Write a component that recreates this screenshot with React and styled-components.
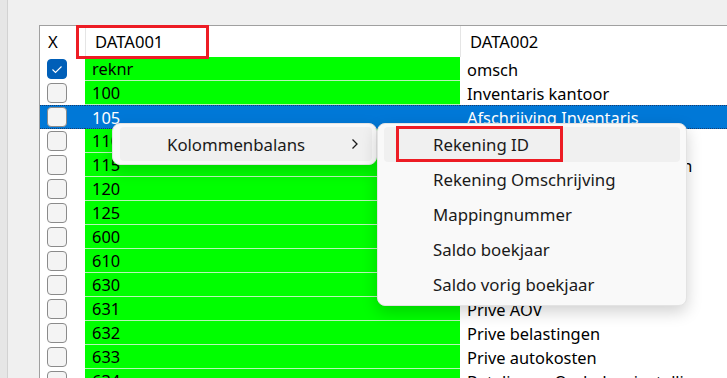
import React from "react";
import styled, { createGlobalStyle } from "styled-components";

const GlobalStyle = createGlobalStyle`
  html, body {
    margin: 0;
    padding: 0;
    background: #f0f0f0;
  }
  body {
    font-family: "Noto Sans", "Open Sans", sans-serif;
  }
`;

const rows = [
  { id: "reknr", omsch: "omsch", checked: true },
  { id: "100", omsch: "Inventaris kantoor" },
  { id: "105", omsch: "Afschrijving Inventaris", selected: true },
  { id: "110", omsch: "Vervoermiddelen" },
  { id: "115", omsch: "Afschrijving vervoermiddelen" },
  { id: "120", omsch: "Bedrijfspand" },
  { id: "125", omsch: "Afschrijving pand" },
  { id: "600", omsch: "Kapitaal" },
  { id: "610", omsch: "Prive stortingen" },
  { id: "630", omsch: "Prive opnamen" },
  { id: "631", omsch: "Prive AOV" },
  { id: "632", omsch: "Prive belastingen" },
  { id: "633", omsch: "Prive autokosten" },
  { id: "634", omsch: "Betalingen Oudedagsinstelling" },
];

const subItems = [
  "Rekening ID",
  "Rekening Omschrijving",
  "Mappingnummer",
  "Saldo boekjaar",
  "Saldo vorig boekjaar",
];

function Check({ checked }) {
  return (
    <CheckBox checked={checked}>
      {checked && (
        <svg width="20" height="20" viewBox="0 0 20 20">
          <polyline
            points="5.5,10.5 8.5,13.5 14.5,7.5"
            fill="none"
            stroke="#ffffff"
            strokeWidth="1.1"
          />
        </svg>
      )}
    </CheckBox>
  );
}

function App() {
  return (
    <Page>
      <GlobalStyle />
      <LeftStrip />
      <Content>
        <Grid>
          <HeadCell>X</HeadCell>
          <HeadCell sep>DATA001</HeadCell>
          <HeadCell sep>DATA002</HeadCell>
          {rows.map((r) => (
            <React.Fragment key={r.id}>
              <CheckCell selected={r.selected}>
                <Check checked={r.checked} />
              </CheckCell>
              <IdCell selected={r.selected}>{r.id}</IdCell>
              <TextCell selected={r.selected}>{r.omsch}</TextCell>
            </React.Fragment>
          ))}
        </Grid>
      </Content>

      <Menu>
        <MenuItem active>
          <span>Kolommenbalans</span>
          <svg width="8" height="12" viewBox="0 0 8 12">
            <polyline
              points="1.5,1.5 6,6 1.5,10.5"
              fill="none"
              stroke="#1a1a1a"
              strokeWidth="1.3"
            />
          </svg>
        </MenuItem>
      </Menu>

      <SubMenu>
        {subItems.map((s, i) => (
          <SubItem key={s} active={i === 0}>
            {s}
          </SubItem>
        ))}
      </SubMenu>

      <Marker style={{ left: 76, top: 25, width: 133, height: 34 }} />
      <Marker style={{ left: 396, top: 126, width: 167, height: 36 }} />
    </Page>
  );
}

export default App;

const Page = styled.div`
  position: relative;
  width: 727px;
  height: 378px;
  overflow: hidden;
  display: flex;
  background: #f0f0f0;
`;

const LeftStrip = styled.div`
  width: 7px;
  background: #e6e6e6;
  border-right: 1px solid #d2d2d2;
  flex-shrink: 0;
`;

const Content = styled.div`
  flex: 1;
  padding: 25px 0 0 31px;
`;

const Grid = styled.div`
  display: grid;
  grid-template-columns: 45px 375px 1fr;
  grid-template-rows: 31px;
  grid-auto-rows: 24px;
  background: #ffffff;
  border-top: 1px solid #a0a0a0;
  border-left: 1px solid #a0a0a0;
  height: 100%;
  font-size: 16.4px;
  color: #000;
`;

const HeadCell = styled.div`
  display: flex;
  align-items: center;
  padding-left: ${(p) => (p.sep ? "9px" : "8px")};
  border-left: ${(p) => (p.sep ? "1px solid #e5e5e5" : "none")};
  font-size: 16.6px;
`;

const CheckCell = styled.div`
  display: flex;
  align-items: center;
  padding-left: 7px;
  background: ${(p) => (p.selected ? "#0078d7" : "#ffffff")};
  border-top: ${(p) => (p.selected ? "1px dotted #1d3c6b" : "none")};
  border-bottom: ${(p) => (p.selected ? "1px dotted #1d3c6b" : "none")};
`;

const CheckBox = styled.div`
  width: 20px;
  height: 20px;
  box-sizing: border-box;
  border-radius: 4px;
  border: 1px solid ${(p) => (p.checked ? "#005fb8" : "#8b8b8b")};
  background: ${(p) => (p.checked ? "#005fb8" : "#f4f4f4")};
  display: flex;
  svg {
    margin: -1px;
  }
`;

const IdCell = styled.div`
  display: flex;
  align-items: center;
  padding-left: 7px;
  background: ${(p) => (p.selected ? "#0078d7" : "#00ff00")};
  color: ${(p) => (p.selected ? "#ffffff" : "#000000")};
  border-bottom: ${(p) =>
    p.selected ? "1px dotted #1d3c6b" : "1px solid #b8f5b8"};
  border-top: ${(p) => (p.selected ? "1px dotted #1d3c6b" : "none")};
  box-sizing: border-box;
`;

const TextCell = styled.div`
  display: flex;
  align-items: center;
  padding-left: 7px;
  white-space: nowrap;
  overflow: hidden;
  background: ${(p) => (p.selected ? "#0078d7" : "#ffffff")};
  color: ${(p) => (p.selected ? "#ffffff" : "#000000")};
  border-top: ${(p) => (p.selected ? "1px dotted #1d3c6b" : "none")};
  border-bottom: ${(p) => (p.selected ? "1px dotted #1d3c6b" : "none")};
`;

const Menu = styled.div`
  position: absolute;
  left: 112px;
  top: 123px;
  width: 265px;
  box-sizing: border-box;
  padding: 3px 4px 3px 7px;
  background: #f9f9f9;
  border: 1px solid #e3e3e3;
  border-radius: 8px;
  box-shadow: 0 6px 16px rgba(0, 0, 0, 0.16);
  font-size: 16.8px;
  color: #1a1a1a;
`;

const MenuItem = styled.div`
  height: 34px;
  display: flex;
  align-items: center;
  justify-content: space-between;
  padding: 0 13px 0 47px;
  border-radius: 4px;
  background: ${(p) => (p.active ? "#f0f0f0" : "transparent")};
`;

const SubMenu = styled.div`
  position: absolute;
  left: 377px;
  top: 123px;
  width: 310px;
  box-sizing: border-box;
  padding: 3px 6px;
  background: #f9f9f9;
  border: 1px solid #e3e3e3;
  border-radius: 8px;
  box-shadow: 0 6px 16px rgba(0, 0, 0, 0.18);
  font-size: 16.8px;
  color: #1a1a1a;
`;

const SubItem = styled.div`
  height: 35px;
  display: flex;
  align-items: center;
  padding-left: 49px;
  border-radius: 4px;
  background: ${(p) => (p.active ? "#f0f0f0" : "transparent")};
`;

const Marker = styled.div`
  position: absolute;
  box-sizing: border-box;
  border: 3px solid #ed1c24;
  pointer-events: none;
`;
